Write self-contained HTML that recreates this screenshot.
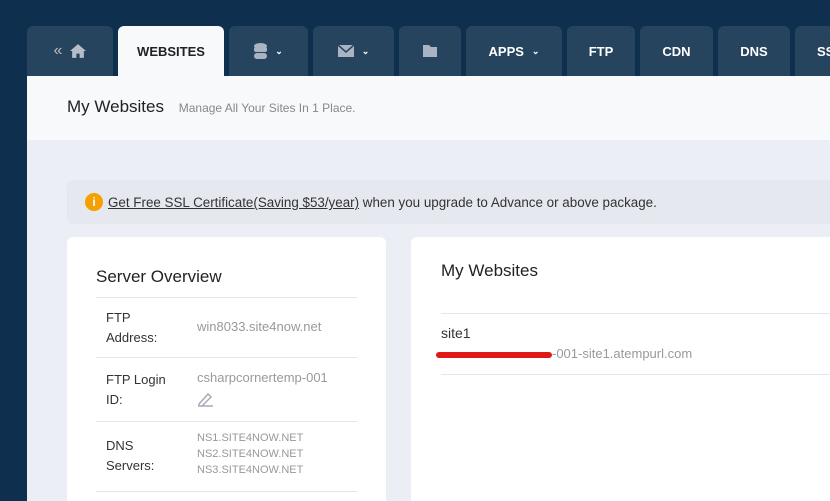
<!DOCTYPE html>
<html style="overflow:hidden;height:501px"><head><style>
*{margin:0;padding:0;box-sizing:border-box}
body{width:830px;height:501px;overflow:hidden;background:#0e2f4e;font-family:"Liberation Sans",sans-serif;position:relative}
.tab{position:absolute;top:26px;height:50px;background:#27445f;border-radius:6px 6px 0 0;color:#fff;font-size:13px;font-weight:bold;display:flex;align-items:center;justify-content:center;gap:8px}
.tab.act{background:#f8f9fb;color:#222;top:26px}
.main{position:absolute;left:27px;top:76px;right:0;bottom:0;background:#eceef5}
.hdr{position:absolute;left:27px;top:76px;right:0;height:64px;background:#f8f9fb}
.card{position:absolute;background:#fff;border-radius:6px}
.row{position:absolute;left:29px;width:261px;border-top:1px solid #e4e6ea}
.lab{position:absolute;left:10px;font-size:13px;color:#333;line-height:20px}
.val{position:absolute;left:101px;font-size:13px;color:#999;line-height:20px}
</style></head><body>
<div class="main"></div>
<div class="hdr"></div>
<div class="tab" style="left:27px;width:86px"><span style="color:#bbb;font-weight:normal;font-size:16px">«</span><svg width="16" height="14" viewBox="0 0 15 13"><path d="M7.5 0L0 6.5h2V13h4V9h3v4h4V6.5h2z" fill="#b5bdc8"/></svg></div>
<div class="tab act" style="left:118px;width:106px">WEBSITES</div>
<div class="tab" style="left:229px;width:79px"><svg width="13" height="16"><ellipse cx="6.5" cy="3" rx="6.5" ry="3" fill="#aab3c2"/><rect y="4" width="13" height="5" rx="2" fill="#aab3c2"/><rect y="10" width="13" height="6" rx="3" fill="#aab3c2"/></svg><span style="font-size:9px">&#8964;</span></div>
<div class="tab" style="left:313px;width:81px"><svg width="16" height="12"><rect width="16" height="12" fill="#aab3c2"/><path d="M0 0l8 7 8-7" stroke="#27445f" fill="none" stroke-width="1.5"/></svg><span style="font-size:9px">&#8964;</span></div>
<div class="tab" style="left:399px;width:62px"><svg width="14" height="12"><path d="M0 0h6l2 2h6v10H0z" fill="#aab3c2"/></svg></div>
<div class="tab" style="left:466px;width:96px">APPS <span style="font-size:9px">&#8964;</span></div>
<div class="tab" style="left:567px;width:68px">FTP</div>
<div class="tab" style="left:640px;width:73px">CDN</div>
<div class="tab" style="left:718px;width:72px">DNS</div>
<div class="tab" style="left:795px;width:60px;justify-content:flex-start;padding-left:22px">SSL</div>
<div style="position:absolute;left:67px;top:97px;font-size:17px;color:#222">My Websites <span style="font-size:12px;color:#888;margin-left:10px">Manage All Your Sites In 1 Place.</span></div>
<div style="position:absolute;left:67px;top:180px;right:0;height:44px;background:#e5e8ee;border-radius:6px 0 0 6px"></div>
<div style="position:absolute;left:85px;top:193px;width:18px;height:18px;border-radius:50%;background:#f5a000;color:#fff;font-size:12px;font-weight:bold;text-align:center;line-height:18px">i</div>
<div style="position:absolute;left:108px;top:195px;font-size:13.4px;color:#333"><u style="color:#333">Get Free SSL Certificate(Saving $53/year)</u> when you upgrade to Advance or above package.</div>
<div class="card" style="left:67px;top:237px;width:319px;height:270px">
<div style="position:absolute;left:29px;top:30px;font-size:17px;color:#222">Server Overview</div>
<div class="row" style="top:60px;height:60px"><div class="lab" style="top:10px">FTP<br>Address:</div><div class="val" style="top:19px">win8033.site4now.net</div></div>
<div class="row" style="top:120px;height:64px"><div class="lab" style="top:12px">FTP Login<br>ID:</div><div class="val" style="top:10px">csharpcornertemp-001</div><svg style="position:absolute;left:101px;top:33px" width="17" height="16"><path d="M2 13L11 3l3 3-9 9H2zM1 15h15" stroke="#aab" fill="none" stroke-width="1.5"/></svg></div>
<div class="row" style="top:184px;height:70px"><div class="lab" style="top:14px">DNS<br>Servers:</div><div class="val" style="top:8px;font-size:11px;line-height:16px">NS1.SITE4NOW.NET<br>NS2.SITE4NOW.NET<br>NS3.SITE4NOW.NET</div></div>
<div class="row" style="top:254px;height:1px"></div>
</div>
<div class="card" style="left:411px;top:237px;width:430px;height:270px;border-radius:6px 0 0 0">
<div style="position:absolute;left:30px;top:24px;font-size:17px;color:#222">My Websites</div>
<div style="position:absolute;left:30px;top:76px;right:0;border-top:1px solid #e4e6ea;height:62px;border-bottom:1px solid #e4e6ea">
<div style="position:absolute;left:0;top:11px;font-size:14px;color:#333">site1</div>
<div style="position:absolute;left:0;top:32px;font-size:13px;color:#999"><span style="display:inline-block;width:116px;height:6px;background:#e01818;border-radius:3px;vertical-align:middle;margin-left:-5px"></span>-001-site1.atempurl.com</div>
</div></div>
</body></html>
